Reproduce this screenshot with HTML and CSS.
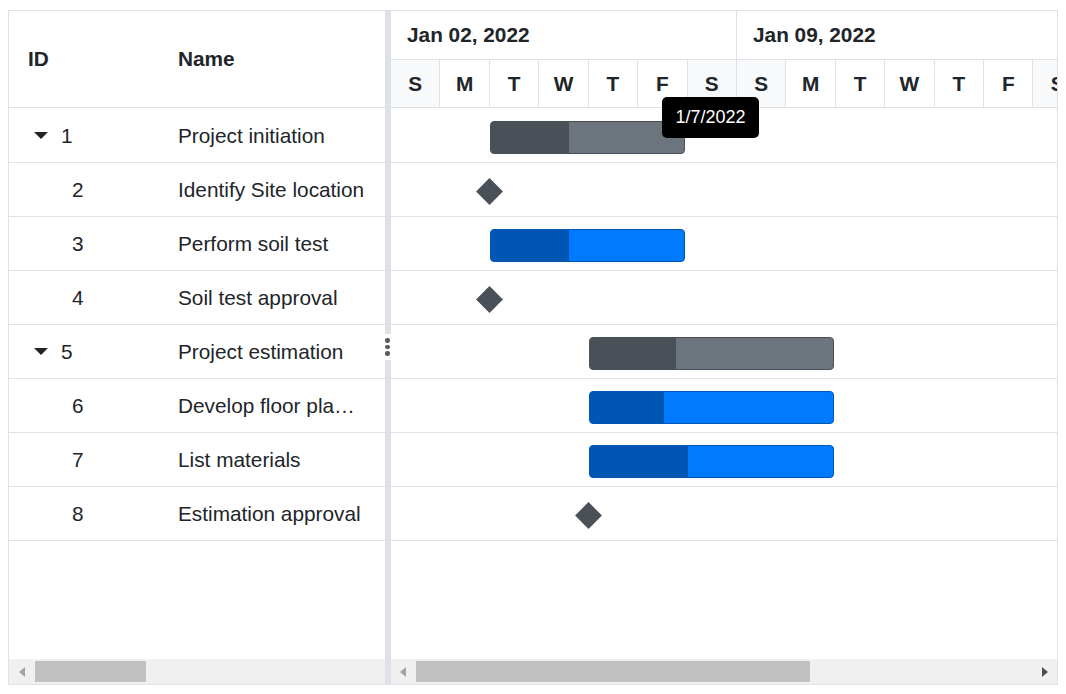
FILE: index.html
```html
<!DOCTYPE html>
<html>
<head>
<meta charset="utf-8">
<link rel="stylesheet" href="styles.css">
</head>
<body>
<div class="gantt">
  <div class="pane left">
    <div class="grid-header">
      <div class="col-id hd">ID</div>
      <div class="col-name hd">Name</div>
    </div>
    <div class="grid-body">
      <div class="row"><div class="col-id"><span class="caret"></span><span class="idt">1</span></div><div class="col-name">Project initiation</div></div>
      <div class="row"><div class="col-id child"><span class="idt">2</span></div><div class="col-name">Identify Site location</div></div>
      <div class="row"><div class="col-id child"><span class="idt">3</span></div><div class="col-name">Perform soil test</div></div>
      <div class="row"><div class="col-id child"><span class="idt">4</span></div><div class="col-name">Soil test approval</div></div>
      <div class="row"><div class="col-id"><span class="caret"></span><span class="idt">5</span></div><div class="col-name">Project estimation</div></div>
      <div class="row"><div class="col-id child"><span class="idt">6</span></div><div class="col-name">Develop floor plan for estimation</div></div>
      <div class="row"><div class="col-id child"><span class="idt">7</span></div><div class="col-name">List materials</div></div>
      <div class="row"><div class="col-id child"><span class="idt">8</span></div><div class="col-name">Estimation approval</div></div>
    </div>
    <div class="hscroll">
      <span class="arr arr-left"></span>
      <div class="track"><div class="thumb thumb-left"></div></div>
    </div>
  </div>
  <div class="splitter">
    <div class="grip"><span class="dot"></span><span class="dot"></span><span class="dot"></span></div>
  </div>
  <div class="pane right">
    <div class="timeline">
      <div class="tier1">
        <div class="week">Jan 02, 2022</div>
        <div class="week">Jan 09, 2022</div>
      </div>
      <div class="tier2">
        <div class="day we">S</div><div class="day">M</div><div class="day">T</div><div class="day">W</div><div class="day">T</div><div class="day">F</div><div class="day we">S</div>
        <div class="day we">S</div><div class="day">M</div><div class="day">T</div><div class="day">W</div><div class="day">T</div><div class="day">F</div><div class="day we">S</div>
      </div>
    </div>
    <div class="chart-body">
      <div class="crow"><div class="bar parent" style="left:99px;width:195px"><div class="prog" style="width:78px"></div></div></div>
      <div class="crow"><div class="ms" style="left:98px"></div></div>
      <div class="crow"><div class="bar" style="left:99px;width:195px"><div class="prog" style="width:78px"></div></div></div>
      <div class="crow"><div class="ms" style="left:98px"></div></div>
      <div class="crow"><div class="bar parent" style="left:198px;width:245px"><div class="prog" style="width:86px"></div></div></div>
      <div class="crow"><div class="bar" style="left:198px;width:245px"><div class="prog" style="width:74px"></div></div></div>
      <div class="crow"><div class="bar" style="left:198px;width:245px"><div class="prog" style="width:98px"></div></div></div>
      <div class="crow"><div class="ms" style="left:197px"></div></div>
    </div>
    <div class="hscroll">
      <span class="arr arr-left"></span>
      <div class="track"><div class="thumb thumb-right"></div></div>
      <span class="arr arr-right"></span>
    </div>
    <div class="tooltip">1/7/2022</div>
  </div>
</div>
</body>
</html>
```
FILE: styles.css
```css
html, body {
  margin: 0;
  padding: 0;
  background: #fff;
}
body {
  padding: 10px 8px;
  font-family: "Liberation Sans", Arial, sans-serif;
  font-size: 20.8px;
  color: #212529;
}
.gantt {
  display: flex;
  width: 1050px;
  height: 675px;
  box-sizing: border-box;
  border: 1px solid #dee2e6;
}
.pane {
  display: flex;
  flex-direction: column;
  position: relative;
  overflow: hidden;
}
.left {
  width: 376px;
  flex: none;
}
.right {
  flex: 1;
  min-width: 0;
}
.grid-header {
  height: 97px;
  box-sizing: border-box;
  border-bottom: 1px solid #dee2e6;
  display: flex;
  align-items: center;
}
.hd {
  font-weight: bold;
}
.col-id {
  width: 150px;
  flex: none;
  box-sizing: border-box;
  padding-left: 19px;
  display: flex;
  align-items: center;
}
.col-id.child {
  padding-left: 63px;
}
.col-name {
  flex: 1;
  min-width: 0;
  box-sizing: border-box;
  padding-left: 19px;
  padding-right: 20px;
  white-space: nowrap;
  overflow: hidden;
  text-overflow: ellipsis;
}
.grid-body {
  flex: 1;
  padding-top: 1px;
}
.row {
  height: 54px;
  box-sizing: border-box;
  border-bottom: 1px solid #dee2e6;
  display: flex;
  align-items: center;
}
.caret {
  width: 25px;
  height: 8px;
  margin-right: 8px;
  position: relative;
  flex: none;
}
.caret::before {
  content: "";
  position: absolute;
  left: 6px;
  top: 0;
  border-left: 7px solid transparent;
  border-right: 7px solid transparent;
  border-top: 7px solid #212529;
}
.splitter {
  width: 6px;
  flex: none;
  background: #dee2e6;
  position: relative;
}
.grip {
  position: absolute;
  left: -1px;
  top: 323px;
  width: 7px;
  height: 26px;
  background: #fff;
  display: flex;
  flex-direction: column;
  align-items: center;
  justify-content: center;
  gap: 2px;
}
.dot {
  width: 4.5px;
  height: 4.5px;
  border-radius: 50%;
  background: #555b61;
}
.timeline {
  flex: none;
}
.tier1 {
  display: grid;
  grid-template-columns: repeat(2, 346px);
  height: 49px;
  box-sizing: border-box;
  border-bottom: 1px solid #dee2e6;
}
.week {
  font-weight: bold;
  display: flex;
  align-items: center;
  padding-left: 16px;
  border-right: 1px solid #dee2e6;
  white-space: nowrap;
}
.tier2 {
  display: grid;
  grid-template-columns: repeat(14, 49.43px);
  height: 48px;
  box-sizing: border-box;
  border-bottom: 1px solid #dee2e6;
}
.day {
  font-weight: bold;
  display: flex;
  align-items: center;
  justify-content: center;
  border-right: 1px solid #dee2e6;
}
.day.we {
  background: #f8f9fa;
}
.chart-body {
  flex: 1;
  padding-top: 1px;
}
.crow {
  height: 54px;
  box-sizing: border-box;
  border-bottom: 1px solid #dee2e6;
  position: relative;
}
.bar {
  position: absolute;
  top: 12px;
  height: 33px;
  box-sizing: border-box;
  border: 1px solid #0056b3;
  border-radius: 4px;
  background: #007bff;
  overflow: hidden;
}
.bar .prog {
  height: 100%;
  background: #0056b3;
}
.bar.parent {
  background: #6c757d;
  border-color: #495057;
}
.bar.parent .prog {
  background: #495057;
}
.ms {
  position: absolute;
  top: 18.5px;
  width: 19px;
  height: 19px;
  margin-left: -9px;
  background: #495057;
  transform: rotate(45deg);
}
.hscroll {
  height: 25px;
  flex: none;
  background: #f0f0f0;
  display: flex;
  align-items: center;
  position: relative;
}
.track {
  flex: 1;
  height: 21px;
  position: relative;
}
.thumb {
  position: absolute;
  top: 0;
  height: 21px;
  background: #c1c1c1;
}
.left .thumb-left {
  left: 0;
  width: 111px;
}
.thumb-right {
  left: 0;
  width: 394px;
}
.arr {
  flex: none;
  width: 0;
  height: 0;
  border-top: 5px solid transparent;
  border-bottom: 5px solid transparent;
}
.arr-left {
  border-right: 6px solid #a3a3a3;
  margin-left: 10px;
  margin-right: 10px;
}
.right .arr-left {
  margin-left: 9px;
  margin-right: 10px;
}
.arr-right {
  border-left: 6px solid #505050;
  margin-left: 10px;
  margin-right: 9px;
}
.right .track {
  margin-right: 222px;
}
.tooltip {
  position: absolute;
  left: 271px;
  top: 86px;
  width: 97px;
  height: 41px;
  box-sizing: border-box;
  background: #000;
  color: #fff;
  border-radius: 5px;
  font-size: 18px;
  display: flex;
  align-items: center;
  justify-content: center;
}
```
